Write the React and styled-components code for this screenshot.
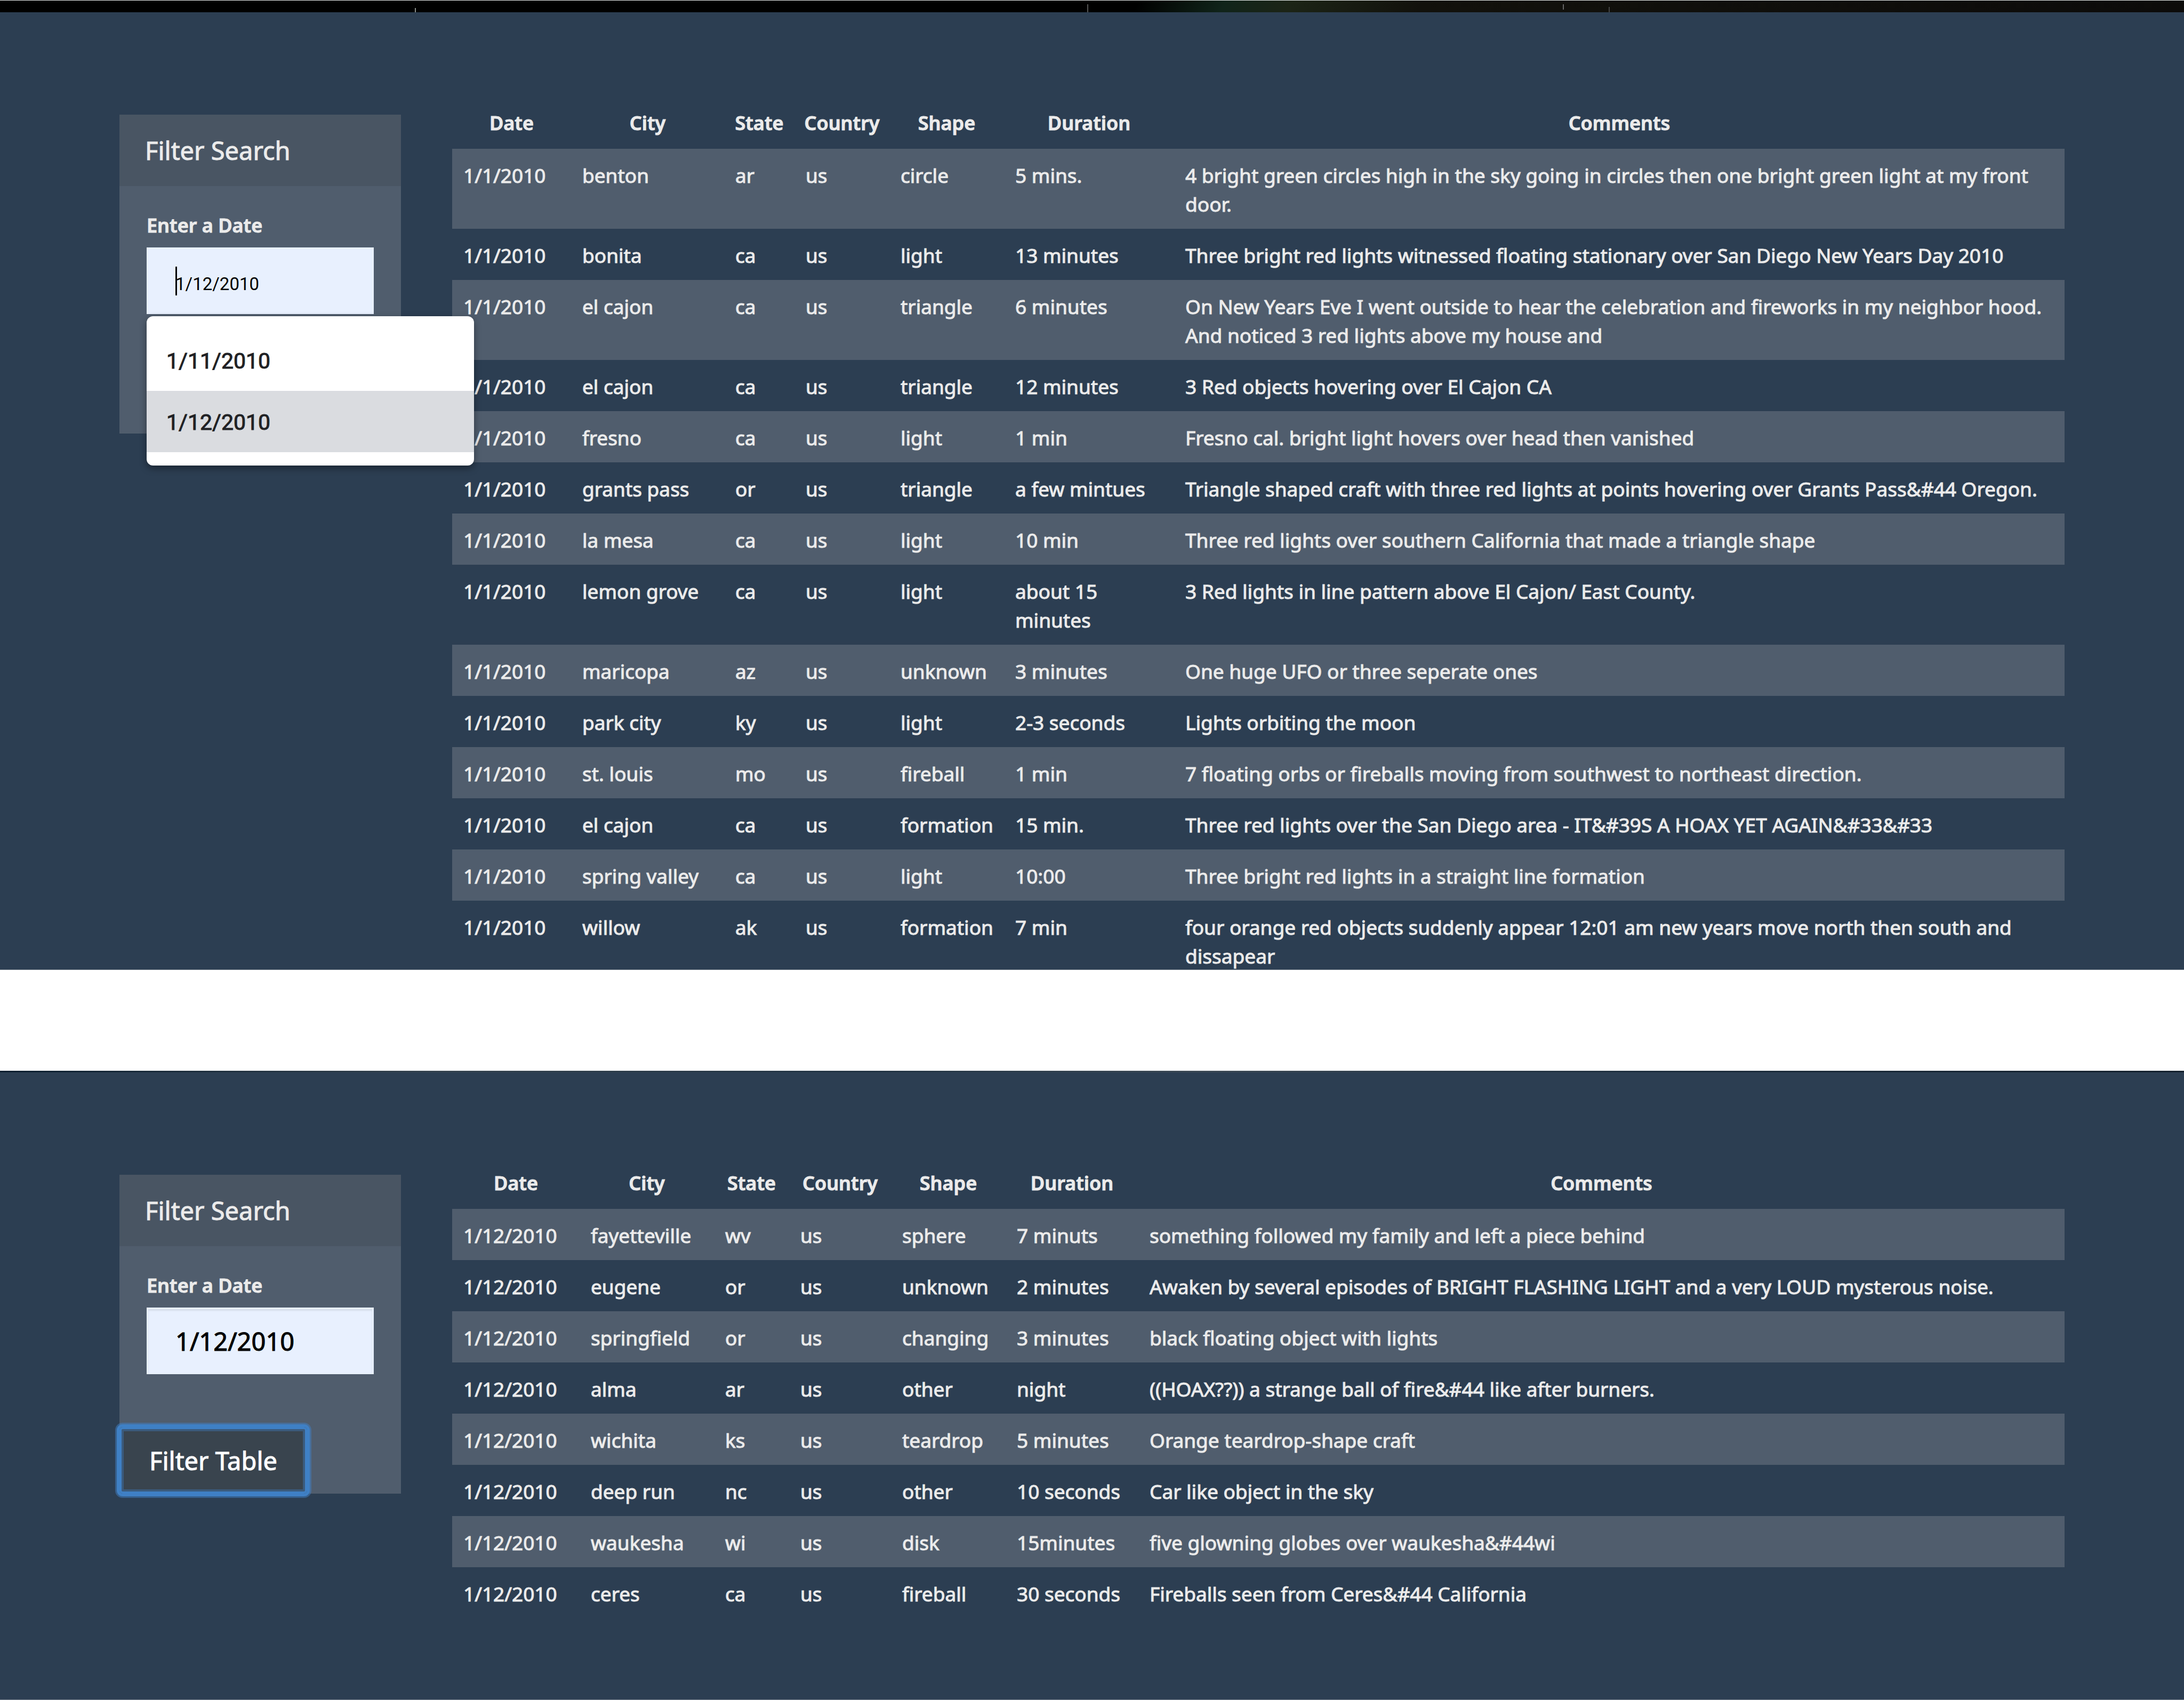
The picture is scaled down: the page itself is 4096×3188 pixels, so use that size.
import React from "react";
import styled, { createGlobalStyle } from "styled-components";

const color = {
  page: "#2c3e52",
  stripe: "#505d6d",
  header: "#495563",
  text: "#ebebeb",
  field: "#e8f0fe",
  ring: "#3f80c5",
};

const GlobalStyle = createGlobalStyle`
  *, *::before, *::after { box-sizing: border-box; }
  body {
    margin: 0;
    background: #fff;
    color: ${color.text};
    font-family: "Noto Sans", "Open Sans", sans-serif;
    font-size: 37px;
    line-height: 54px;
    -webkit-text-stroke: 1px currentColor;
  }
`;

const Page = styled.main`
  display: flex;
  flex-direction: column;
  gap: 189px;
  min-height: 100vh;
`;

const Panel = styled.section`
  display: flex;
  flex-direction: column;
  background: ${color.page};
  flex: ${(p) => (p.$clipped ? "none" : "1")};
  max-height: ${(p) => (p.$clipped ? "1819px" : "none")};
  overflow: hidden;
  border-bottom: 1px solid #78838e;
`;

const NightSky = styled.div`
  flex: none;
  height: 23px;
  border-top: 1px solid #e9eeee;
  background:
    linear-gradient(#8a8f8a, #8a8f8a) 19% 100% / 2px 8px no-repeat,
    linear-gradient(#555, #555) 49.8% 100% / 2px 15px no-repeat,
    linear-gradient(#666, #666) 71.6% 60% / 2px 10px no-repeat,
    linear-gradient(#444, #444) 73.7% 100% / 2px 10px no-repeat,
    linear-gradient(115deg, transparent 52%, #10241a 56%, #1c2416 59%, #12110c 65%, #0c0b0a 100%) #000;
`;

const SkyEdge = styled.div`
  flex: none;
  height: 3px;
  background: linear-gradient(90deg, #0c1f30, #35434f 20%, #223444 40%, #3c4955 55%, #1f3040 75%, #14212e);
`;

const Content = styled.div`
  display: grid;
  grid-template-columns: 528px minmax(0, 1fr);
  gap: 96px;
  align-items: start;
  padding: 160px 224px 0;
`;

const Card = styled.form`
  margin-top: 32px;
  background: ${color.stripe};
`;

const CardHeader = styled.header`
  padding: 0 48px;
  background: ${color.header};
  font-size: 47px;
  line-height: 134px;
`;

const CardBody = styled.div`
  padding: 47px 51px 99px;
`;

const CardFooter = styled.div`
  min-height: 125px;
`;

const Label = styled.label`
  display: block;
  margin-bottom: 14px;
  font-size: 36px;
  font-weight: 600;
`;

const Field = styled.div`
  position: relative;
`;

const DateInput = styled.input`
  display: block;
  width: 100%;
  height: 125px;
  margin: 0;
  padding: ${(p) => (p.$preview ? "12px 51px 0" : "0 51px")};
  border: 3px solid ${color.field};
  border-radius: 0;
  outline: none;
  background: ${color.field};
  box-shadow: ${(p) => (p.$preview ? "none" : "inset 0 3px 3px rgba(0, 0, 0, 0.08)")};
  color: #000;
  font-family: ${(p) => (p.$preview ? "Roboto, sans-serif" : "inherit")};
  font-size: ${(p) => (p.$preview ? "33px" : "47px")};
  font-weight: 400;
  -webkit-text-stroke: ${(p) => (p.$preview ? "0" : "1px currentColor")};
`;

const Caret = styled.span`
  position: absolute;
  top: 36px;
  left: 54px;
  width: 3px;
  height: 54px;
  background: #000;
`;

const Suggestions = styled.ul`
  position: absolute;
  top: 129px;
  left: 0;
  z-index: 2;
  width: 614px;
  margin: 0;
  padding: 25px 0;
  list-style: none;
  border-radius: 12px;
  background: #fff;
  box-shadow: 0 5px 14px rgba(0, 0, 0, 0.4);
`;

const Suggestion = styled.li`
  padding: 3px 37px 0;
  background: ${(p) => (p.$active ? "#dadce0" : "transparent")};
  color: #202124;
  font-family: Roboto, sans-serif;
  font-size: 41px;
  line-height: 112px;
`;

const FilterButton = styled.button`
  display: block;
  width: 352px;
  height: 125px;
  padding: 0;
  border: 0;
  border-radius: 6px;
  outline: none;
  background: #39444e;
  box-shadow:
    inset 0 0 0 4px ${color.ring},
    inset 0 0 0 8px rgba(63, 128, 197, 0.4),
    0 0 0 5px ${color.ring},
    0 0 0 8px rgba(63, 128, 197, 0.5);
  color: #fff;
  font: inherit;
  font-size: 47px;
  -webkit-text-stroke: 1px currentColor;
`;

const Table = styled.table`
  width: 100%;
  table-layout: fixed;
  border-collapse: collapse;
`;

const Column = styled.col`
  width: ${(p) => (p.$width ? `${p.$width}px` : "auto")};
`;

const HeadCell = styled.th`
  padding: 21px 0;
  font-size: 36px;
  font-weight: 600;
  text-align: center;
  white-space: nowrap;
`;

const Row = styled.tr`
  &:nth-child(odd) {
    background: ${color.stripe};
  }
`;

const Cell = styled.td`
  padding: 23px 21px 19px;
  vertical-align: top;
`;

const headings = ["Date", "City", "State", "Country", "Shape", "Duration", "Comments"];

const newYear = [
  ["1/1/2010", "benton", "ar", "us", "circle", "5 mins.", "4 bright green circles high in the sky going in circles then one bright green light at my front door."],
  ["1/1/2010", "bonita", "ca", "us", "light", "13 minutes", "Three bright red lights witnessed floating stationary over San Diego New Years Day 2010"],
  ["1/1/2010", "el cajon", "ca", "us", "triangle", "6 minutes", "On New Years Eve I went outside to hear the celebration and fireworks in my neighbor hood. And noticed 3 red lights above my house and"],
  ["1/1/2010", "el cajon", "ca", "us", "triangle", "12 minutes", "3 Red objects hovering over El Cajon CA"],
  ["1/1/2010", "fresno", "ca", "us", "light", "1 min", "Fresno cal. bright light hovers over head then vanished"],
  ["1/1/2010", "grants pass", "or", "us", "triangle", "a few mintues", "Triangle shaped craft with three red lights at points hovering over Grants Pass&#44 Oregon."],
  ["1/1/2010", "la mesa", "ca", "us", "light", "10 min", "Three red lights over southern California that made a triangle shape"],
  ["1/1/2010", "lemon grove", "ca", "us", "light", "about 15 minutes", "3 Red lights in line pattern above El Cajon/ East County."],
  ["1/1/2010", "maricopa", "az", "us", "unknown", "3 minutes", "One huge UFO or three seperate ones"],
  ["1/1/2010", "park city", "ky", "us", "light", "2-3 seconds", "Lights orbiting the moon"],
  ["1/1/2010", "st. louis", "mo", "us", "fireball", "1 min", "7 floating orbs or fireballs moving from southwest to northeast direction."],
  ["1/1/2010", "el cajon", "ca", "us", "formation", "15 min.", "Three red lights over the San Diego area - IT&#39S A HOAX YET AGAIN&#33&#33"],
  ["1/1/2010", "spring valley", "ca", "us", "light", "10:00", "Three bright red lights in a straight line formation"],
  ["1/1/2010", "willow", "ak", "us", "formation", "7 min", "four orange red objects suddenly appear 12:01 am new years move north then south and dissapear"],
];

const filtered = [
  ["1/12/2010", "fayetteville", "wv", "us", "sphere", "7 minuts", "something followed my family and left a piece behind"],
  ["1/12/2010", "eugene", "or", "us", "unknown", "2 minutes", "Awaken by several episodes of BRIGHT FLASHING LIGHT and a very LOUD mysterous noise."],
  ["1/12/2010", "springfield", "or", "us", "changing", "3 minutes", "black floating object with lights"],
  ["1/12/2010", "alma", "ar", "us", "other", "night", "((HOAX??)) a strange ball of fire&#44 like after burners."],
  ["1/12/2010", "wichita", "ks", "us", "teardrop", "5 minutes", "Orange teardrop-shape craft"],
  ["1/12/2010", "deep run", "nc", "us", "other", "10 seconds", "Car like object in the sky"],
  ["1/12/2010", "waukesha", "wi", "us", "disk", "15minutes", "five glowning globes over waukesha&#44wi"],
  ["1/12/2010", "ceres", "ca", "us", "fireball", "30 seconds", "Fireballs seen from Ceres&#44 California"],
];

function SightingsTable({ rows, widths }) {
  return (
    <Table>
      <colgroup>
        {headings.map((name, i) => (
          <Column key={name} $width={widths[i]} />
        ))}
      </colgroup>
      <thead>
        <tr>
          {headings.map((name) => (
            <HeadCell key={name} scope="col">{name}</HeadCell>
          ))}
        </tr>
      </thead>
      <tbody>
        {rows.map((row, r) => (
          <Row key={r}>
            {row.map((value, c) => (
              <Cell key={c}>{value}</Cell>
            ))}
          </Row>
        ))}
      </tbody>
    </Table>
  );
}

function FilterCard({ id, preview, suggestions, children }) {
  return (
    <Card onSubmit={(e) => e.preventDefault()}>
      <CardHeader>Filter Search</CardHeader>
      <CardBody>
        <Label htmlFor={id}>Enter a Date</Label>
        <Field>
          <DateInput id={id} type="text" defaultValue="1/12/2010" autoComplete="off" $preview={preview} />
          {preview && <Caret />}
          {suggestions && (
            <Suggestions role="listbox">
              {suggestions.map((date) => (
                <Suggestion key={date} role="option" aria-selected={date === "1/12/2010"} $active={date === "1/12/2010"}>
                  {date}
                </Suggestion>
              ))}
            </Suggestions>
          )}
        </Field>
      </CardBody>
      <CardFooter>{children}</CardFooter>
    </Card>
  );
}

export default function App() {
  return (
    <>
      <GlobalStyle />
      <Page>
        <Panel $clipped>
          <NightSky />
          <Content>
            <FilterCard id="date-entry" preview suggestions={["1/11/2010", "1/12/2010"]} />
            <SightingsTable rows={newYear} widths={[223, 287, 132, 178, 215, 319]} />
          </Content>
        </Panel>
        <Panel>
          <SkyEdge />
          <Content>
            <FilterCard id="date-filter">
              <FilterButton type="submit">Filter Table</FilterButton>
            </FilterCard>
            <SightingsTable rows={filtered} widths={[239, 252, 141, 191, 215, 249]} />
          </Content>
        </Panel>
      </Page>
    </>
  );
}
